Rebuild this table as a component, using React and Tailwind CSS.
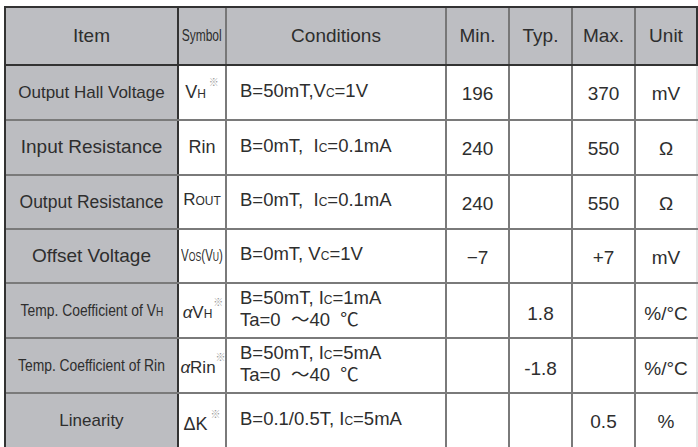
import React from 'react';

const font = { fontFamily: '"Liberation Sans", Arial, "Noto Sans CJK JP", sans-serif' };

// small "C" used in V_C, I_C and sub letters
const Sub = ({ children, className = '' }) => (
    <span className={`text-[12px] ${className}`}>{children}</span>
);

const Mark = ({ gap = 'ml-[3px]' }) => (
    <span className={`relative -top-[12px] ${gap} text-[10px] text-[#9a9a9a]`}>※</span>
);

const rows = [
    {
        h: 'h-[55px]',
        item: <span className="text-[17px]">Output Hall Voltage</span>,
        symbol: <span className="text-[18px]">V<Sub>H</Sub><Mark /></span>,
        cond: <span>B=50mT,V<Sub>C</Sub>=1V</span>,
        min: '196', typ: '', max: '370', unit: 'mV', nums: 'pt-1',
    },
    {
        h: 'h-[55px]',
        item: <span className="text-[19px]">Input Resistance</span>,
        symbol: <span className="text-[18px]">Rin</span>,
        cond: <span>B=0mT,&nbsp; I<Sub>C</Sub>=0.1mA</span>,
        min: '240', typ: '', max: '550', unit: 'Ω', nums: 'pt-1',
    },
    {
        h: 'h-[54px]',
        item: <span className="text-[17.5px]">Output Resistance</span>,
        symbol: <span className="text-[17px] -mt-1">R<Sub>OUT</Sub></span>,
        cond: <span>B=0mT,&nbsp; I<Sub>C</Sub>=0.1mA</span>,
        min: '240', typ: '', max: '550', unit: 'Ω', nums: 'pt-1',
    },
    {
        h: 'h-[54px]',
        item: <span className="text-[19px]">Offset Voltage</span>,
        symbol: (
            <span className="inline-block scale-x-[0.72] whitespace-nowrap text-[16px]">
                V<Sub>OS</Sub>(V<Sub>U</Sub>)
            </span>
        ),
        cond: <span>B=0mT, V<Sub>C</Sub>=1V</span>,
        min: '−7', typ: '', max: '+7', unit: 'mV', nums: 'pt-1',
    },
    {
        h: 'h-[55px]',
        item: (
            <span className="inline-block scale-x-[0.84] whitespace-nowrap text-[16.5px]">
                Temp. Coefficient of V<Sub>H</Sub>
            </span>
        ),
        symbol: <span className="text-[17px] mt-1 pl-[2px]"><i>α</i>V<Sub>H</Sub><Mark gap="ml-[1px]" /></span>,
        cond: (
            <div className="leading-[19px]">
                <div>B=50mT, I<Sub>C</Sub>=1mA</div>
                <div>Ta=0&nbsp; ～40&nbsp; ℃</div>
            </div>
        ),
        min: '', typ: '1.8', max: '', unit: '%/°C', nums: 'pt-2',
    },
    {
        h: 'h-[55px]',
        item: (
            <span className="inline-block scale-x-[0.84] whitespace-nowrap text-[16.5px]">
                Temp. Coefficient of Rin
            </span>
        ),
        symbol: <span className="text-[17px] mt-1 pl-[2px]"><i>α</i>Rin<Mark gap="ml-0" /></span>,
        cond: (
            <div className="leading-[19px]">
                <div>B=50mT, I<Sub>C</Sub>=5mA</div>
                <div>Ta=0&nbsp; ～40&nbsp; ℃</div>
            </div>
        ),
        min: '', typ: '-1.8', max: '', unit: '%/°C', nums: 'pt-2',
    },
    {
        h: 'h-[55px]',
        item: <span className="text-[17px]">Linearity</span>,
        symbol: <span className="text-[18px] mt-2">ΔK<Mark /></span>,
        cond: <span>B=0.1/0.5T, I<Sub>C</Sub>=5mA</span>,
        min: '', typ: '', max: '0.5', unit: '%', nums: 'pt-1',
    },
];

const cols = 'grid grid-cols-[173px_48px_220px_63px_63px_63px_62px]';

export default function App() {
    return (
        <div className="w-[698px] h-[447px] overflow-hidden bg-white pt-[6px] pl-[4px] text-[#2e2e2e]" style={font}>
            <div className="border-l-2 border-t-2 border-[#333]">
                {/* Header */}
                <div className={`${cols} h-[58px] bg-[#bdbec2] border-b-2 border-[#333] text-[19px]`}>
                    <div className="flex items-center justify-center border-r-2 border-[#333]">Item</div>
                    <div className="flex items-center justify-center border-r-2 border-[#777]">
                        <span className="inline-block scale-x-[0.75] text-[16px]">Symbol</span>
                    </div>
                    <div className="flex items-center justify-center border-r-2 border-[#777]">Conditions</div>
                    <div className="flex items-center justify-center border-r-2 border-[#777]">Min.</div>
                    <div className="flex items-center justify-center border-r-2 border-[#777]">Typ.</div>
                    <div className="flex items-center justify-center border-r-2 border-[#777]">Max.</div>
                    <div className="flex items-center justify-center border-r-2 border-[#333]">Unit</div>
                </div>

                {/* Body */}
                {rows.map((r, i) => (
                    <div key={i} className={`${cols} ${r.h} border-b-2 border-[#7a7a7a]`}>
                        <div className="flex items-center justify-center bg-[#bcbdc1] border-r-2 border-[#333]">
                            {r.item}
                        </div>
                        <div className="flex items-center justify-center border-r-2 border-[#7a7a7a] whitespace-nowrap">
                            {r.symbol}
                        </div>
                        <div className="flex items-center pl-[13px] pb-1 border-r-2 border-[#7a7a7a] text-[18.5px] whitespace-nowrap">
                            {r.cond}
                        </div>
                        <div className={`flex items-center justify-center ${r.nums} border-r-2 border-[#7a7a7a] text-[19px]`}>{r.min}</div>
                        <div className={`flex items-center justify-center ${r.nums} border-r-2 border-[#7a7a7a] text-[19px]`}>{r.typ}</div>
                        <div className={`flex items-center justify-center ${r.nums} border-r-2 border-[#7a7a7a] text-[19px]`}>{r.max}</div>
                        <div className={`flex items-center justify-center ${r.nums} border-r-2 border-[#e4e4e4] text-[19px]`}>{r.unit}</div>
                    </div>
                ))}
            </div>
        </div>
    );
}
